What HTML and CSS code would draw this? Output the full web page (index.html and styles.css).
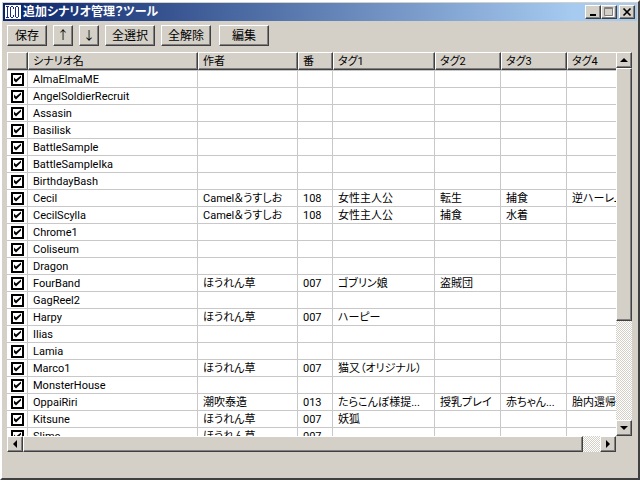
FILE: index.html
```html
<!DOCTYPE html>
<html lang="ja">
<head>
    <meta charset="UTF-8">
    <meta name="viewport" content="width=device-width, initial-scale=1.0">
    <title>追加シナリオ管理？ツール</title>
    <link rel="stylesheet" href="styles.css">
</head>
<body>

<div class="window">
    <header class="titlebar">
        <svg class="app-icon" width="16" height="16" viewBox="0 0 16 16" shape-rendering="crispEdges" aria-hidden="true">
            <rect width="16" height="16" fill="#fff"/>
            <path fill="none" stroke="#1c2c80" d="M0 .5h16M0 15.500h16M1 2.500h3M1 13.500h3M2.500 2v12M5.500 3v10M6 2.500h2M6 13.500h2M8.500 3v2M8.500 11v2M10.500 3v10M13.500 3v10M11 2.500h2M11 13.500h2"/>
        </svg>
        <h1 class="title">追加シナリオ管理？ツール</h1>
        <button type="button" class="caption" aria-label="最小化"><svg width="10" height="10" viewBox="0 0 10 10"><path fill="#000" d="M2 7h6v2H2z"/></svg></button>
        <button type="button" class="caption" aria-label="最大化"><svg width="10" height="10" viewBox="0 0 10 10"><path fill="none" stroke="#fff" d="M1.500 9.500h8v-8"/><path fill="none" stroke="#808080" d="M.5.5h8v8h-8zM.5 1.500h8"/></svg></button>
        <button type="button" class="caption close" aria-label="閉じる"><svg width="10" height="10" viewBox="0 0 10 10"><path fill="none" stroke="#000" stroke-width="1.700" d="M1.500 1.500l7 7M8.500 1.500l-7 7"/></svg></button>
    </header>

    <div class="toolbar">
        <button type="button" class="medium">保存</button>
        <button type="button" class="small">↑</button>
        <button type="button" class="small">↓</button>
        <button type="button">全選択</button>
        <button type="button">全解除</button>
        <button type="button" class="edit">編集</button>
    </div>

    <main class="list">
        <div class="view">
            <table>
                <colgroup>
                    <col class="c-check"><col class="c-name"><col class="c-author"><col class="c-no"><col class="c-tag1"><col class="c-tag"><col class="c-tag"><col>
                </colgroup>
                <thead>
                    <tr><th></th><th>シナリオ名</th><th>作者</th><th>番</th><th>タグ1</th><th>タグ2</th><th>タグ3</th><th>タグ4</th></tr>
                </thead>
                <tbody>
                    <tr><td><input type="checkbox" id="s1" checked></td><td><label for="s1">AlmaElmaME</label></td><td></td><td></td><td></td><td></td><td></td><td></td></tr>
                    <tr><td><input type="checkbox" id="s2" checked></td><td><label for="s2">AngelSoldierRecruit</label></td><td></td><td></td><td></td><td></td><td></td><td></td></tr>
                    <tr><td><input type="checkbox" id="s3" checked></td><td><label for="s3">Assasin</label></td><td></td><td></td><td></td><td></td><td></td><td></td></tr>
                    <tr><td><input type="checkbox" id="s4" checked></td><td><label for="s4">Basilisk</label></td><td></td><td></td><td></td><td></td><td></td><td></td></tr>
                    <tr><td><input type="checkbox" id="s5" checked></td><td><label for="s5">BattleSample</label></td><td></td><td></td><td></td><td></td><td></td><td></td></tr>
                    <tr><td><input type="checkbox" id="s6" checked></td><td><label for="s6">BattleSampleIka</label></td><td></td><td></td><td></td><td></td><td></td><td></td></tr>
                    <tr><td><input type="checkbox" id="s7" checked></td><td><label for="s7">BirthdayBash</label></td><td></td><td></td><td></td><td></td><td></td><td></td></tr>
                    <tr><td><input type="checkbox" id="s8" checked></td><td><label for="s8">Cecil</label></td><td>Camel＆うすしお</td><td>108</td><td>女性主人公</td><td>転生</td><td>捕食</td><td>逆ハーレム</td></tr>
                    <tr><td><input type="checkbox" id="s9" checked></td><td><label for="s9">CecilScylla</label></td><td>Camel＆うすしお</td><td>108</td><td>女性主人公</td><td>捕食</td><td>水着</td><td></td></tr>
                    <tr><td><input type="checkbox" id="s10" checked></td><td><label for="s10">Chrome1</label></td><td></td><td></td><td></td><td></td><td></td><td></td></tr>
                    <tr><td><input type="checkbox" id="s11" checked></td><td><label for="s11">Coliseum</label></td><td></td><td></td><td></td><td></td><td></td><td></td></tr>
                    <tr><td><input type="checkbox" id="s12" checked></td><td><label for="s12">Dragon</label></td><td></td><td></td><td></td><td></td><td></td><td></td></tr>
                    <tr><td><input type="checkbox" id="s13" checked></td><td><label for="s13">FourBand</label></td><td>ほうれん草</td><td>007</td><td>ゴブリン娘</td><td>盗賊団</td><td></td><td></td></tr>
                    <tr><td><input type="checkbox" id="s14" checked></td><td><label for="s14">GagReel2</label></td><td></td><td></td><td></td><td></td><td></td><td></td></tr>
                    <tr><td><input type="checkbox" id="s15" checked></td><td><label for="s15">Harpy</label></td><td>ほうれん草</td><td>007</td><td>ハーピー</td><td></td><td></td><td></td></tr>
                    <tr><td><input type="checkbox" id="s16" checked></td><td><label for="s16">Ilias</label></td><td></td><td></td><td></td><td></td><td></td><td></td></tr>
                    <tr><td><input type="checkbox" id="s17" checked></td><td><label for="s17">Lamia</label></td><td></td><td></td><td></td><td></td><td></td><td></td></tr>
                    <tr><td><input type="checkbox" id="s18" checked></td><td><label for="s18">Marco1</label></td><td>ほうれん草</td><td>007</td><td>猫又（オリジナル）</td><td></td><td></td><td></td></tr>
                    <tr><td><input type="checkbox" id="s19" checked></td><td><label for="s19">MonsterHouse</label></td><td></td><td></td><td></td><td></td><td></td><td></td></tr>
                    <tr><td><input type="checkbox" id="s20" checked></td><td><label for="s20">OppaiRiri</label></td><td>潮吹泰造</td><td>013</td><td>たらこんぼ様提...</td><td>授乳プレイ</td><td>赤ちゃん...</td><td>胎内還帰</td></tr>
                    <tr><td><input type="checkbox" id="s21" checked></td><td><label for="s21">Kitsune</label></td><td>ほうれん草</td><td>007</td><td>妖狐</td><td></td><td></td><td></td></tr>
                    <tr><td><input type="checkbox" id="s22" checked></td><td><label for="s22">Slime</label></td><td>ほうれん草</td><td>007</td><td></td><td></td><td></td><td></td></tr>
                </tbody>
            </table>
        </div>

        <div class="scrollbar vertical">
            <button type="button" aria-label="上へ"><svg width="8" height="8" viewBox="0 0 8 8"><path d="M0 6h8L4 2z"/></svg></button>
            <div class="track"><div class="thumb"></div></div>
            <button type="button" aria-label="下へ"><svg width="8" height="8" viewBox="0 0 8 8"><path d="M0 2h8L4 6z"/></svg></button>
        </div>

        <div class="scrollbar horizontal">
            <button type="button" aria-label="左へ"><svg width="8" height="8" viewBox="0 0 8 8"><path d="M6 0v8L2 4z"/></svg></button>
            <div class="track"><div class="thumb"></div></div>
            <button type="button" aria-label="右へ"><svg width="8" height="8" viewBox="0 0 8 8"><path d="M2 0v8l4-4z"/></svg></button>
        </div>
    </main>
</div>

</body>
</html>
```
FILE: styles.css
```css
* {
    box-sizing: border-box;
}

body {
    margin: 0;
    font-family: Roboto, "Noto Sans CJK JP", sans-serif;
    font-size: 12px;
    font-feature-settings: "palt";
    color: #000;
}

.window {
    display: flex;
    flex-direction: column;
    height: 100vh;
    padding: 1px;
    background-color: #d4d0c8;
    border: 2px solid;
    border-color: #fff #404040 #404040 #fff;
}

button {
    display: flex;
    align-items: center;
    justify-content: center;
    padding: 0;
    font: inherit;
    font-feature-settings: inherit;
    color: #000;
    background-color: #d4d0c8;
    border: 1px solid;
    border-color: #fff #404040 #404040 #fff;
    box-shadow: inset -1px -1px #808080;
}

/* title bar */
.titlebar {
    display: flex;
    align-items: center;
    height: 18px;
    padding: 0 2px;
    background: linear-gradient(to right, #0a246a, #a6caf0 90%);
}

.title {
    flex: 1;
    margin: 0 0 0 2px;
    font-size: 12px;
    line-height: 18px;
    font-weight: bold;
    color: #fff;
}

.caption {
    width: 16px;
    height: 14px;
}

.close {
    margin-left: 2px;
}

/* toolbar */
.toolbar {
    display: flex;
    gap: 6px;
    padding: 4px;
}

.toolbar button {
    width: 50px;
    height: 21px;
    line-height: 18px;
}

.toolbar .medium {
    width: 40px;
}

.toolbar .small {
    width: 20px;
}

.toolbar .edit {
    margin-left: 2px;
}

/* list */
.list {
    flex: 1;
    min-height: 0;
    display: grid;
    grid-template-columns: minmax(0, 1fr) 16px;
    grid-template-rows: minmax(0, 1fr) 16px;
    margin: 2px 5px 25px 4px;
}

.view {
    overflow: hidden;
    background-color: #fff;
}

table {
    width: 100%;
    min-width: 625px;
    table-layout: fixed;
    border-collapse: separate;
    border-spacing: 0;
    font-size: 11px;
}

.c-check {
    width: 21px;
}

.c-name {
    width: 170px;
}

.c-author {
    width: 100px;
}

.c-no {
    width: 35px;
}

.c-tag1 {
    width: 102px;
}

.c-tag {
    width: 66px;
}

th, td {
    padding: 2px 0 0 5px;
    overflow: hidden;
    white-space: nowrap;
    text-align: left;
    font-weight: normal;
    line-height: 14px;
}

th {
    height: 18px;
    padding-left: 4px;
    background-color: #d4d0c8;
    border: 1px solid;
    border-color: #fff #404040 #404040 #fff;
    box-shadow: inset -1px -1px #808080;
}

tbody td {
    height: 17px;
    border-right: 1px solid #c8c8c8;
    border-bottom: 1px solid #c8c8c8;
}

/* the first row sits under a grid line of its own */
tbody tr:first-child td {
    height: 18px;
    border-top: 1px solid #c8c8c8;
}

td:first-child {
    padding: 0 0 0 4px;
    font-size: 0;
}

input {
    display: block;
    width: 13px;
    height: 13px;
    margin: 0;
    appearance: none;
    background-color: #fff;
    border: 2px solid #000;
}

input:checked::before {
    content: "";
    display: block;
    width: 9px;
    height: 9px;
    background-color: #000;
    clip-path: polygon(1px 3px, 3px 5px, 8px 1px, 8px 3px, 3px 8px, 1px 6px);
}

/* scroll bars */
.scrollbar {
    display: flex;
}

.vertical {
    flex-direction: column;
}

.scrollbar button {
    flex: none;
    width: 16px;
    height: 16px;
}

.track {
    flex: 1;
    background: repeating-conic-gradient(#fff 0 25%, #d4d0c8 0 50%) 0 0 / 2px 2px;
}

.thumb {
    background-color: #d4d0c8;
    border: 1px solid;
    border-color: #fff #404040 #404040 #fff;
    box-shadow: inset -1px -1px #808080;
}

.vertical .thumb {
    height: 72%;
}

.horizontal .thumb {
    width: 97%;
    height: 100%;
}
```
